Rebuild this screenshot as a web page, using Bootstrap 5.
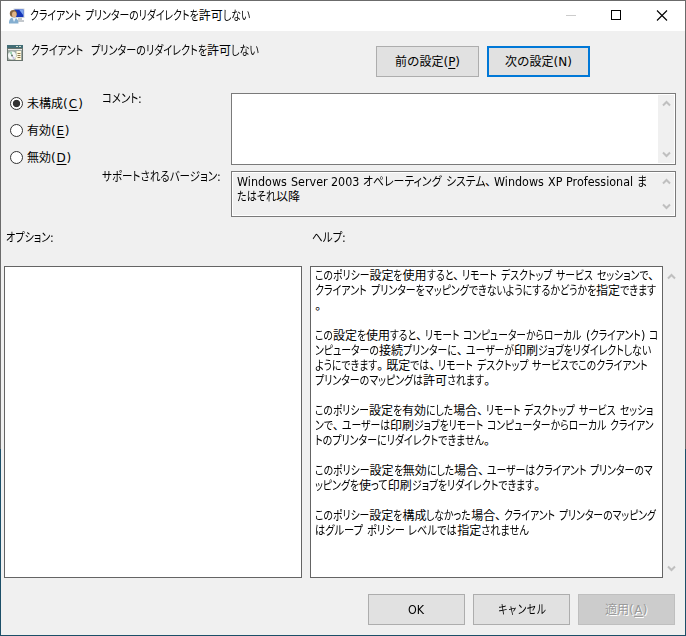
<!DOCTYPE html>
<html lang="ja">
<head>
<meta charset="utf-8">
<title>クライアント プリンターのリダイレクトを許可しない</title>
<link href="https://cdn.jsdelivr.net/npm/bootstrap@5.3.0/dist/css/bootstrap.min.css" rel="stylesheet">
<style>
body{font:12px/15px "DejaVu Sans","Noto Sans CJK JP",sans-serif;font-feature-settings:"palt";color:#000;width:686px;height:636px;overflow:hidden}
.frame{width:686px;height:636px;padding:1px;background:linear-gradient(#6b6b6b 0 449px,#1c4f68 449px)}
.face{background:#f0f0f0;height:604px}
.titlebar{height:30px;padding-left:8px}
.fit{white-space:pre;display:block;height:15px}
.run{display:inline-block;white-space:pre;transform-origin:0 50%}
.kana{font-size:12.5px;line-height:13px}
.comma{padding-right:3px}
u .run{text-decoration:underline;text-underline-offset:2px}
.push{font-size:12px;line-height:15px;padding:1px 0 0;height:31px;border-radius:0;border:1px solid #adadad;background:#e1e1e1;color:#000;display:flex;align-items:center;justify-content:center}
.push.focus-default{border:2px solid #0078d7}
.push:disabled{background:#ccc;border-color:#bfbfbf;color:#9a9a9a;opacity:1;text-shadow:1px 1px #fff}
.w-nav{width:103px}.w-dlg{width:97px}
.heading{height:62px;padding:13px 0 0 6px}
.heading .nav-buttons{margin:2px 0 0 auto;padding-right:95px}
.title-text{margin-left:5px}
.heading-text{margin-left:8px}
.states{width:96px;padding:4px 0 0 9px}
.state{height:27px;line-height:15px}
.state input{appearance:none;width:13px;height:13px;margin:0 4px 0 0;border:1px solid #333;border-radius:50%;background:#fff}
.state input:checked{background:radial-gradient(#333 0 3.3px,#fff 4.1px)}
.captions{width:134px;padding-left:5px}
.caption-comment{margin-top:-1px}
.caption-versions{margin-top:63px}
.fields{width:445px}
.box{border:1px solid #7a7a7a;background:#fff}
.comment{height:72px}
.versions{height:46px;margin-top:6px;background:#f0f0f0;box-shadow:inset 0 0 0 1px #fff}
.versions-text{padding:3px 0 0 5px}
.bar{width:17px;background:#f0f0f0;color:#bfbfbf;padding:7px 0 6px}
.bar svg{display:block}
.inner-bar{margin:1px;width:16px;padding:5px 0}
.details{padding:14px 5px 0 3px}
.options-col{width:298px;margin-right:8px}
.section-label{margin:0 0 20px 2px}
.list{height:312px;border-color:#646464}
.help-text{width:353px;padding:2px 0 0 4px}
.foot{padding:16px 10px 0 0}
</style>
<script src="https://cdn.jsdelivr.net/npm/bootstrap@5.3.0/dist/js/bootstrap.bundle.min.js"></script>
</head>
<body>
<svg width="0" height="0" class="position-absolute"><defs>
<path id="up" d="M1 5.500 4.500 2 8 5.500" fill="none" stroke="currentColor" stroke-width="2"/>
<path id="down" d="M1 1.500 4.500 5 8 1.500" fill="none" stroke="currentColor" stroke-width="2"/></defs></svg>
<div class="frame">
  <header class="titlebar bg-white d-flex align-items-center">
    <svg width="16" height="16" viewBox="0 0 16 16"><path d="M4.500.5h11v9.500h-11z" fill="#cfd4da"/><path d="M5.500 1.500h9v7.500h-9z" fill="#1536b8"/><path d="M10 1.500h4.500v6z" fill="#7fa5ee"/><path d="M9 10h4v2h2v2H8v-2h1z" fill="#c3c8cd"/><path d="M0 15.500c0-5 2-6 4.500-6s5 2 5 6z" fill="#84aed0"/><path d="M3.500 10l1.500 4 2-4z" fill="#e9f3fb"/><circle cx="4.300" cy="5.500" r="3.500" fill="#85633e"/><ellipse cx="5.300" cy="6.500" rx="2.300" ry="3" fill="#e0b486"/></svg>
    <span class="fit title-text" data-w="220">クライアント プリンターのリダイレクトを許可しない</span>
    <div class="d-flex align-items-center ms-auto">
      <svg width="138" height="30" viewBox="0 0 138 30" fill="none" shape-rendering="crispEdges"><path d="M19 14.500h10" stroke="#ccc"/><path d="M64.500 9.500h9v9h-9z" stroke="#000"/><path d="M110 9.500l10 10M120 9.500l-10 10" stroke="#000" stroke-width="1.100" shape-rendering="auto"/></svg>
    </div>
  </header>
  <main class="face">
    <div class="heading d-flex align-items-start">
      <svg width="16" height="17" viewBox="0 0 16 17"><path d="M0 1h16v16H0z" fill="#68736d"/><path d="M0 1h16v3H0z" fill="#426d76"/><path d="M9 2h2v1H9zm3 0h2v1h-2z" fill="#d3dfcf"/><path d="M1 5h14v11H1z" fill="#a0aaa4"/><path d="M1 5h14v1H1z" fill="#e8e8e8"/><circle cx="5" cy="11.500" r="4" fill="#f4f8f6"/><path d="M5 11.500 2 8.500l3-1z" fill="#9fd2b4"/><path d="M5 11.500 8 14l-2 1z" fill="#c4b8dc"/><circle cx="5" cy="11.500" r="1" fill="#637469"/><path d="M9.500 7H14v9H8.500v-3h1z" fill="#fff8dc"/><path d="M10.500 9.500h3m-3 2h3m-3 2h3" stroke="#8c7a50"/></svg>
      <span class="fit heading-text" data-w="228">クライアント  プリンターのリダイレクトを許可しない</span>
      <div class="nav-buttons d-flex gap-2">
        <button class="btn push w-nav"><span class="fit" data-kerned="65">前の設定(<u>P</u>)</span></button>
        <button class="btn push focus-default w-nav"><span class="fit" data-kerned="67">次の設定(N)</span></button>
      </div>
    </div>
    <div class="d-flex">
      <div class="states">
        <label class="state d-flex align-items-start"><input type="radio" name="state" checked><span class="fit" data-kerned="57">未構成(<u>C</u>)</span></label>
        <label class="state d-flex align-items-start"><input type="radio" name="state"><span class="fit" data-kerned="43">有効(<u>E</u>)</span></label>
        <label class="state d-flex align-items-start"><input type="radio" name="state"><span class="fit" data-kerned="45">無効(<u>D</u>)</span></label>
      </div>
      <div class="captions"><span class="fit caption-comment" data-w="40">コメント:</span><span class="fit caption-versions" data-w="119">サポートされるバージョン:</span></div>
      <div class="fields">
        <div class="box comment d-flex justify-content-end"><div class="bar inner-bar d-flex flex-column align-items-center justify-content-between"><svg width="9" height="7"><use href="#up"/></svg><svg width="9" height="7"><use href="#down"/></svg></div></div>
        <div class="box versions d-flex justify-content-between">
          <div class="versions-text"><span class="fit" data-w="410">Windows Server 2003 オペレーティング システム、Windows XP Professional ま</span><span class="fit" data-w="63">たはそれ以降</span></div>
          <div class="bar inner-bar d-flex flex-column align-items-center justify-content-between"><svg width="9" height="7"><use href="#up"/></svg><svg width="9" height="7"><use href="#down"/></svg></div>
        </div>
      </div>
    </div>
    <div class="details d-flex">
      <div class="options-col"><span class="fit section-label" data-w="48">オプション:</span><div class="box list"></div></div>
      <div><span class="fit section-label" data-w="34">ヘルプ:</span>
        <div class="d-flex"><div class="box list help-text">
          <span class="fit" data-w="342">このポリシー設定を使用すると、リモート デスクトップ サービス セッションで、</span>
          <span class="fit" data-w="341">クライアント プリンターをマッピングできないようにするかどうかを指定できます</span>
          <span class="fit">。</span><br>
          <span class="fit" data-w="343">この設定を使用すると、リモート コンピューターからローカル (クライアント) コ</span>
          <span class="fit" data-w="336">ンピューターの接続プリンターに、ユーザーが印刷ジョブをリダイレクトしない</span>
          <span class="fit" data-w="333">ようにできます。既定では、リモート デスクトップ サービスでこのクライアント</span>
          <span class="fit" data-w="178">プリンターのマッピングは許可されます。</span><br>
          <span class="fit" data-w="338">このポリシー設定を有効にした場合、リモート デスクトップ サービス セッショ</span>
          <span class="fit" data-w="339">ンで、ユーザーは印刷ジョブをリモート コンピューターからローカル クライアン</span>
          <span class="fit" data-w="178">トのプリンターにリダイレクトできません。</span><br>
          <span class="fit" data-w="338">このポリシー設定を無効にした場合、ユーザーはクライアント プリンターのマ</span>
          <span class="fit" data-w="228">ッピングを使って印刷ジョブをリダイレクトできます。</span><br>
          <span class="fit" data-w="341">このポリシー設定を構成しなかった場合、クライアント プリンターのマッピング</span>
          <span class="fit" data-w="214">はグループ ポリシー レベルでは指定されません</span>
        </div>
        <div class="bar d-flex flex-column align-items-center justify-content-between"><svg width="9" height="7"><use href="#up"/></svg><svg width="9" height="7"><use href="#down"/></svg></div></div>
      </div>
    </div>
    <div class="foot d-flex justify-content-end gap-2">
      <button class="btn push w-dlg"><span class="fit">OK</span></button>
      <button class="btn push w-dlg"><span class="fit" data-w="48">キャンセル</span></button>
      <button class="btn push w-dlg" disabled><span class="fit" data-kerned="43">適用(<u>A</u>)</span></button>
    </div>
  </main>
</div>
<script>
// Condense Latin slightly, then condense kana so each line has its set width; kanji keep full width.
// Captions with an access key (data-kerned) widen only the Latin part.
function squeeze(run, scale) {
  const w = run.getBoundingClientRect().width;
  run.style.transform = `scaleX(${scale})`;
  run.style.marginRight = `${w * (scale - 1)}px`;
}
const widthOf = runs => runs.reduce((sum, run) => sum + run.getBoundingClientRect().width, 0);
for (const line of document.querySelectorAll('.fit')) {
  const nodes = [], walker = document.createTreeWalker(line, NodeFilter.SHOW_TEXT);
  while (walker.nextNode()) nodes.push(walker.currentNode);
  for (const node of nodes) {
    const parts = node.data.match(/[、。]|[\u3003-\u30ff]+|[!-~]+|[^\u3001-\u30ff!-~]+/g) || [];
    node.replaceWith(...parts.map(text => {
      const run = document.createElement('span');
      run.className = 'run ' + (/[、。]/.test(text) ? 'comma' : /[\u3003-\u30ff]/.test(text) ? 'kana' : /[!-~]/.test(text) ? 'latin' : 'other');
      run.textContent = text;
      return run;
    }));
  }
  line.style.width = 'max-content';
  const latin = [...line.querySelectorAll('.latin')];
  if (line.dataset.kerned) {
    const extra = Number(line.dataset.kerned) - line.getBoundingClientRect().width;
    const letters = latin.reduce((n, run) => n + run.textContent.length, 0);
    latin.forEach(run => run.style.letterSpacing = `${extra / letters}px`);
    continue;
  }
  latin.forEach(run => squeeze(run, .93));
  const target = Number(line.dataset.w);
  if (!target) continue;
  const kana = [...line.querySelectorAll('.kana')];
  const total = line.getBoundingClientRect().width;
  const kanaWidth = widthOf(kana);
  const scale = (target - total + kanaWidth) / kanaWidth;
  kana.forEach(run => squeeze(run, scale));
}
</script>
</body>
</html>
